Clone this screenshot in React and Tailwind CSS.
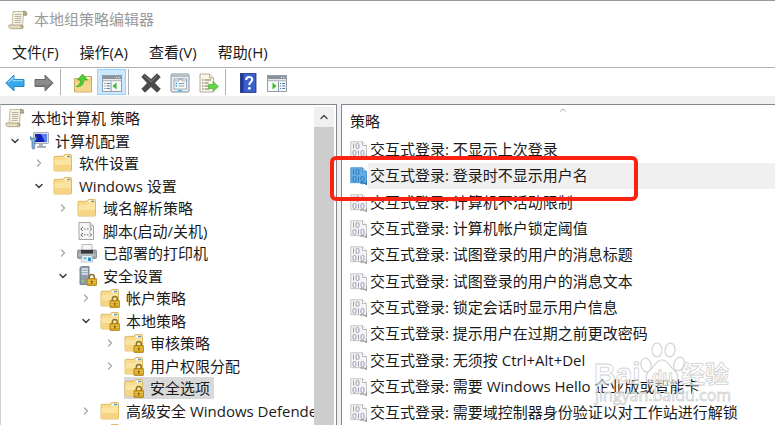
import { useState } from 'react'
import { ChevronDown, ChevronRight, ChevronUp } from 'lucide-react'
import clsx from 'clsx'

const ScrollIcon = ({ className }) => (
  <svg viewBox="0 0 20 20" className={className} aria-hidden="true">
    <path d="M5 1.500h11.500c1 0 1.500 1 1.300 2l-.4 1.200h-2L14.500 17H4z" fill="#f6f0dc" stroke="#b5ad92" strokeWidth=".8" />
    <path d="M15.500 1.200c2.500-.3 3.500 1 3.200 4h-3z" fill="#b9ae8c" stroke="#8d8468" strokeWidth=".7" />
    <path d="M7 4.500h6.500M6.900 6.500h6.500M6.800 8.500h6.500M6.700 10.500h6.500M6.600 12.500h6" stroke="#b0aca4" strokeWidth=".9" />
    <path d="M1 15h12c-.6 1.500-.2 3 1 3.700H2.800C1.200 18.500 .6 17 1 15z" fill="#e5dcbd" stroke="#a39b80" strokeWidth=".8" />
    <path d="M13 15c2.200 0 2.700 2.800 1 3.700" fill="#c9bd97" stroke="#8d8468" />
  </svg>
)

const ComputerIcon = ({ className }) => (
  <svg viewBox="0 0 20 20" className={className} aria-hidden="true">
    <rect x="4.500" y="1.500" width="15" height="11" rx=".8" fill="#d9dde2" stroke="#8a9099" strokeWidth=".7" />
    <path d="M6 3h12v8H6z" fill="#1420b8" />
    <path d="M12 3h6v8h-2z" fill="#5a7ff0" />
    <path d="M10 12.500h4v2.500h3v2H8v-2h2z" fill="#aab0b8" />
    <path d="M1.500 5.500v3.200l1.500 1V17c0 1.300 2.700 1.300 2.700 0V9.700l1.500-1V5.500L5.700 7.200H3z" fill="#7fb4e0" stroke="#456f95" strokeWidth=".7" />
  </svg>
)

const FolderShape = () => (
  <>
    <path d="M1 4.500c0-.8.3-1.200 1-1.200h8l1.500-1.800h6c.7 0 1 .3 1 1V17c0 .7-.3 1-1 1H2c-.7 0-1-.3-1-1z" fill="#f8dc8c" stroke="#d9ac4a" strokeWidth=".8" />
    <path d="M1.500 7h9l1.500-1.500h6V17.400H1.500z" fill="#fbe3a0" />
    <path d="M1.500 12h16.500v5.400H1.500z" fill="#f5d583" />
    <path d="M12 3.500h5" stroke="#fff" strokeWidth="1.800" />
    <path d="M14 3.500h3" stroke="#4a9be0" strokeWidth="1.400" />
  </>
)

const LockShape = () => (
  <>
    <path d="M12.300 13v-1.800c0-3.600 5-3.600 5 0V13" fill="none" stroke="#8a7430" strokeWidth="1.500" />
    <rect x="10" y="12.500" width="9.500" height="7" rx=".6" fill="#d9a520" stroke="#9c7410" strokeWidth=".7" />
    <path d="M10.600 14.500h8.400M10.600 16.500h8.400" stroke="#f0ca58" strokeWidth=".8" />
    <path d="M14.800 14.500v3" stroke="#6a4c08" strokeWidth="1.200" />
  </>
)

const FolderIcon = ({ className }) => (
  <svg viewBox="0 0 20 20" className={className} aria-hidden="true">
    <FolderShape />
  </svg>
)

const LockedFolderIcon = ({ className }) => (
  <svg viewBox="0 0 20 20" className={className} aria-hidden="true">
    <FolderShape />
    <LockShape />
  </svg>
)

const ScriptIcon = ({ className }) => (
  <svg viewBox="0 0 20 20" className={className} aria-hidden="true">
    <path d="M2 1.500h11l3.500 3.500v13.500H2z" fill="#f7f7f7" stroke="#999" strokeWidth=".9" />
    <path d="M13 1.500V5h3.500" fill="#ddd" stroke="#999" strokeWidth=".8" />
    <path d="M6 6 3.800 8 6 10M12.500 6l2.200 2-2.200 2M7 8h1.500M10 8h1.500M6 12l-2.200 1.800L6 15.600M12.500 12l2.200 1.800-2.200 1.800M7 13.800h1.500M10 13.800h1.500" fill="none" stroke="#666" />
  </svg>
)

const PrinterIcon = ({ className }) => (
  <svg viewBox="0 0 20 20" className={className} aria-hidden="true">
    <path d="M5 1.500h10V8H5z" fill="#f4f6f8" stroke="#a5a9ad" strokeWidth=".8" />
    <rect x=".5" y="7" width="19" height="8.500" rx="1" fill="#a1a5a9" stroke="#73777b" strokeWidth=".7" />
    <path d="M4 7h12v3.500H4z" fill="#35383b" />
    <path d="M1.500 12h17" stroke="#d3d5d7" />
    <path d="M5 12.500h10l.8 6.500H4.200z" fill="#e8f5fc" stroke="#9ab" strokeWidth=".6" />
    <path d="M6.500 14h3v2.500h-3z" fill="#6fc3e8" />
    <path d="M11 14.500h3v3.500h-3z" fill="#2b8ec4" />
  </svg>
)

const ServerLockIcon = ({ className }) => (
  <svg viewBox="0 0 20 20" className={className} aria-hidden="true">
    <path d="M3 1.500 5 .5h7v18H3z" fill="#8f9eac" stroke="#5f6e7c" strokeWidth=".8" />
    <path d="M4.500 3h6.500M4.500 5.500h6.500M4.500 8h6.500" stroke="#dde7ee" strokeWidth="1.300" />
    <path d="M4.500 15h3" stroke="#7de05a" strokeWidth="1.300" />
    <LockShape />
  </svg>
)

const PolicyIcon = ({ selected }) => (
  <svg viewBox="0 0 18 18" className="size-[18px] shrink-0" aria-hidden="true">
    <path
      d="M.8.800h11.700l4 3.700v13l-2.500-1.200-2 .7-2-1.300H.8z"
      fill={selected ? '#64aee4' : '#f5f5f5'}
      stroke={selected ? '#4593cf' : '#bdbdbd'}
      strokeWidth=".9"
    />
    <path d="M12.500.8v3.700h4" fill={selected ? '#a4d3f4' : '#fff'} stroke={selected ? '#3d8aca' : '#a8a8a8'} strokeWidth=".8" />
    <path d="m10 15.700 3.500.1 3 1.500v-3.500" fill="none" stroke={selected ? '#2b6fa8' : '#9a9a9a'} strokeWidth="1.100" />
    <g fill="none" stroke={selected ? '#2e72b4' : '#9590ad'} strokeWidth=".9">
      <path d="M3.500 2.500v5M8.500 9.500v5" />
      <rect x="6" y="2.500" width="3" height="5" rx="1.300" />
      <rect x="3" y="9.500" width="3" height="5" rx="1.300" />
      <rect x="11" y="9.500" width="3" height="5" rx="1.300" />
    </g>
  </svg>
)

const ArrowIcon = ({ forward }) => (
  <svg viewBox="0 0 20 20" className={clsx('size-5', forward && 'rotate-180')} aria-hidden="true">
    <path
      d="M.8 10 9 2v4.500h10v7H9V18z"
      fill={forward ? '#8b8b8b' : '#36a8ea'}
      stroke={forward ? '#6a6a6a' : '#2b86c8'}
      strokeLinejoin="round"
    />
    <path d="M3 9.500 8 4.700v3h9.800" fill="none" stroke={forward ? '#777' : '#8bd5fa'} strokeWidth="1.200" />
  </svg>
)

const UpFolderIcon = () => (
  <svg viewBox="0 0 20 20" className="size-5" aria-hidden="true">
    <path d="M1.500 5.500h7l1.500-2h8.500v15.500h-17z" fill="#f0cf80" stroke="#c19b46" strokeWidth=".8" />
    <path d="M2 9h16v9.500H2z" fill="#f4d78e" />
    <path d="M13 5h4" stroke="#fff" strokeWidth="1.200" />
    <path d="M3 13.500c3.500-1 4.500-3.500 4.300-6.500H4.500L9.500 1l5 6h-3.700C11 11 8 14.500 3 13.500z" fill="#4fcf37" stroke="#3aa52c" strokeWidth=".7" />
  </svg>
)

// Console window with a side panel, the arrow shows which side folds away
const PaneIcon = ({ side }) => (
  <svg viewBox="0 0 20 20" className="size-5" aria-hidden="true">
    <rect x=".5" y="2.500" width="19" height="16" fill="#f7f8f9" stroke="#8c949f" strokeWidth=".9" />
    <path d="M1 3h18v3H1z" fill="#8a929e" />
    <path d="M14 4.500h1M16.500 4.500h1" stroke="#fff" />
    <path d="M1 7.500h18" stroke="#b6bdc5" strokeWidth="1.500" />
    {side === 'left' ? (
      <>
        <path d="M9 8.500v10" stroke="#8c949f" />
        <path d="M2.500 10.500h1M2.500 13h1M2.500 15.500h1M4.700 10.500h3M4.700 13h3M4.700 15.500h3" stroke="#4c7fb5" strokeWidth="1.200" />
        <path d="M14.500 9.500v7L10.500 13z" fill="#3dbb2c" />
      </>
    ) : (
      <>
        <path d="M11.500 8.500v10" stroke="#8c949f" />
        <path d="M13 10.500h1M13 13h1M13 15.500h1M15.200 10.500h3M15.200 13h3M15.200 15.500h3" stroke="#4c7fb5" strokeWidth="1.200" />
        <path d="M5.500 9.500v7l4-3.500z" fill="#3dbb2c" />
      </>
    )}
  </svg>
)

const DeleteIcon = () => (
  <svg viewBox="0 0 20 20" className="size-5" aria-hidden="true">
    <path d="M3.500 1 10 6.500 16 .8 19.300 4 13.500 10 19.300 16 16 19.200 10 13.500 4 19.200.8 16 6.500 10 .8 4z" fill="#4a4a4a" stroke="#3a3a3a" strokeWidth=".8" strokeLinejoin="round" />
    <path d="m3.500 3 6.500 5.700L16 3" fill="none" stroke="#858585" />
  </svg>
)

const PropertiesIcon = () => (
  <svg viewBox="0 0 20 20" className="size-5" aria-hidden="true">
    <rect x="1" y="1" width="18" height="18" rx="1" fill="#e7eaee" stroke="#87919c" />
    <path d="M1.500 3h17" stroke="#a7b0ba" strokeWidth="1.500" />
    <path d="M4 6h12.500v10H4z" fill="#fff" stroke="#8b97a6" strokeWidth=".8" />
    <path d="M4 8h5V6h3v2h4.500" fill="none" stroke="#8b97a6" strokeWidth=".8" />
    <path d="M5.500 10.500h1.500M5.500 13h1.500" stroke="#2d9bdc" strokeWidth="1.300" />
    <path d="M8.500 10.500h6M8.500 13h6" stroke="#8893a0" />
    <path d="M8 17.800h4" stroke="#38b2e5" strokeWidth="1.500" />
  </svg>
)

const ExportIcon = () => (
  <svg viewBox="0 0 20 20" className="size-5" aria-hidden="true">
    <path d="M1 1h9.500L14.500 5v14H1z" fill="#fbf7e4" stroke="#a8a48e" strokeWidth=".9" />
    <path d="M10.500 1v4h4" fill="#e9e3c5" stroke="#a8a48e" strokeWidth=".8" />
    <path d="M3 7h1.500M3 10h1.500M3 13h1.500M3 16h1.500M5.500 7h6.500M5.500 10h4M5.500 13h4M5.500 16h5" stroke="#77736a" />
    <path d="M9.500 11.500H14V8.500l5.500 5-5.500 5v-3H9.500z" fill="#62d348" stroke="#4bb038" strokeWidth=".7" />
  </svg>
)

const HelpIcon = () => (
  <svg viewBox="0 0 20 20" className="size-5" aria-hidden="true">
    <rect x="2.500" y=".5" width="15.500" height="19" fill="#3860cf" stroke="#20327c" strokeWidth=".8" />
    <path d="M2.500.5h3v19h-3z" fill="#22388e" />
    <path d="M8.200 7c0-4 6-4 6-.5 0 2.700-2.900 2.500-2.900 5.500" fill="none" stroke="#fff" strokeWidth="2.100" />
    <circle cx="11.300" cy="15.300" r="1.400" fill="#fff" />
  </svg>
)

const menus = ['文件(F)', '操作(A)', '查看(V)', '帮助(H)']

const toolGroups = [
  [
    { label: '后退', icon: <ArrowIcon /> },
    { label: '前进', icon: <ArrowIcon forward /> },
  ],
  [
    { label: '向上一级', icon: <UpFolderIcon /> },
    { label: '显示/隐藏控制台树', icon: <PaneIcon side="left" />, active: true },
  ],
  [
    { label: '删除', icon: <DeleteIcon /> },
    { label: '属性', icon: <PropertiesIcon /> },
    { label: '导出列表', icon: <ExportIcon /> },
  ],
  [
    { label: '帮助', icon: <HelpIcon /> },
    { label: '显示/隐藏操作窗格', icon: <PaneIcon side="right" /> },
  ],
]

const tree = [
  { label: '本地计算机 策略', level: 0, icon: ScrollIcon },
  { label: '计算机配置', level: 1, icon: ComputerIcon, state: 'open' },
  { label: '软件设置', level: 2, icon: FolderIcon, state: 'closed' },
  { label: 'Windows 设置', level: 2, icon: FolderIcon, state: 'open' },
  { label: '域名解析策略', level: 3, icon: FolderIcon, state: 'closed' },
  { label: '脚本(启动/关机)', level: 3, icon: ScriptIcon },
  { label: '已部署的打印机', level: 3, icon: PrinterIcon, state: 'closed' },
  { label: '安全设置', level: 3, icon: ServerLockIcon, state: 'open' },
  { label: '帐户策略', level: 4, icon: LockedFolderIcon, state: 'closed' },
  { label: '本地策略', level: 4, icon: LockedFolderIcon, state: 'open' },
  { label: '审核策略', level: 5, icon: LockedFolderIcon, state: 'closed' },
  { label: '用户权限分配', level: 5, icon: LockedFolderIcon, state: 'closed' },
  { label: '安全选项', level: 5, icon: LockedFolderIcon, selected: true },
  { label: '高级安全 Windows Defender', level: 4, icon: FolderIcon, state: 'closed' },
  { label: '', level: 4, icon: FolderIcon },
]

const indents = ['pl-1', 'pl-1', 'pl-7', 'pl-[52px]', 'pl-[75px]', 'pl-[99px]']

const policies = [
  '交互式登录: 不显示上次登录',
  '交互式登录: 登录时不显示用户名',
  '交互式登录: 计算机不活动限制',
  '交互式登录: 计算机帐户锁定阈值',
  '交互式登录: 试图登录的用户的消息标题',
  '交互式登录: 试图登录的用户的消息文本',
  '交互式登录: 锁定会话时显示用户信息',
  '交互式登录: 提示用户在过期之前更改密码',
  '交互式登录: 无须按 Ctrl+Alt+Del',
  '交互式登录: 需要 Windows Hello 企业版或智能卡',
  '交互式登录: 需要域控制器身份验证以对工作站进行解锁',
]

const TreeRow = ({ item }) => {
  const Icon = item.icon
  return (
    <li className={clsx('flex shrink-0 items-center odd:h-[22px] even:h-[23px]', indents[item.level])}>
      {item.level > 0 && (
        <span className="mr-1 flex w-5 shrink-0 justify-center">
          {item.state === 'open' && <ChevronDown className="size-3 text-[#404040]" strokeWidth={3} />}
          {item.state === 'closed' && <ChevronRight className="size-3 text-[#a6a6a6]" strokeWidth={2.5} />}
        </span>
      )}
      <button
        type="button"
        className={clsx('flex h-full items-center gap-1.5 whitespace-nowrap pr-1', item.selected && 'bg-[#d9d9d9]')}
      >
        <Icon className="size-5 shrink-0" />
        {item.label}
      </button>
    </li>
  )
}

const Watermark = () => (
  <svg viewBox="0 0 142 70" className="pointer-events-none absolute right-10 bottom-[15px] w-[142px]" aria-hidden="true">
    <g fill="#ffffff" fillOpacity=".5" stroke="#d2d2d2" strokeWidth="1.200">
      <ellipse cx="53" cy="25" rx="5" ry="7" transform="rotate(-15 53 25)" />
      <ellipse cx="64" cy="10" rx="5" ry="7" />
      <ellipse cx="77" cy="10" rx="5" ry="7" transform="rotate(8 77 10)" />
      <ellipse cx="86" cy="24" rx="5" ry="7" transform="rotate(20 86 24)" />
      <path d="M69 20c6 0 7 6 12 10 5 5 6 14-3 15-5 .5-13 .5-18 0-9-1-8-11-3-15 5-4 6-10 12-10z" />
      <g strokeWidth=".8">
        <text x="1" y="44" fontSize="30" fontWeight="700" fontFamily="Liberation Sans, sans-serif">Bai</text>
        <text x="59" y="42" fontSize="17" fontWeight="700" fontFamily="Liberation Sans, sans-serif">du</text>
        <text x="88" y="43" fontSize="24" fontWeight="700" fontFamily="Noto Sans CJK SC, sans-serif">经验</text>
      </g>
      <text x="2" y="61" fontSize="16" strokeWidth=".8" fontFamily="Open Sans, sans-serif">jingyan.baidu.com</text>
    </g>
  </svg>
)

const App = () => {
  const [current, setCurrent] = useState(1)

  return (
    <div className="relative flex h-screen flex-col overflow-hidden border-t border-[#9a9a9a] bg-[#f0f0f0] font-['Open_Sans','Noto_Sans_CJK_SC',sans-serif] text-[15px] leading-5 text-[#1a1a1a]">
      <header className="flex h-[38px] shrink-0 items-center gap-1.5 bg-white pl-2">
        <ScrollIcon className="size-5" />
        <h1 className="pb-0.5 text-[#999999]">本地组策略编辑器</h1>
      </header>

      <nav className="flex h-7 shrink-0 items-center gap-[21px] bg-white pb-0.5 pl-3">
        {menus.map((menu) => (
          <button key={menu} type="button">{menu}</button>
        ))}
      </nav>

      <div className="flex h-[29px] shrink-0 items-center border-t border-[#a9b3bd] bg-white">
        {toolGroups.map((group, i) => (
          <div key={i} className={clsx('flex items-center', i > 0 && 'ml-0.5 border-l border-[#b0b0b0] pl-[7px]')}>
            {group.map((tool) => (
              <button
                key={tool.label}
                type="button"
                aria-label={tool.label}
                className={clsx(
                  'flex h-[26px] w-[29px] items-center justify-center border pt-0.5',
                  tool.active ? 'border-[#99d1ff] bg-[#cce8ff]' : 'border-transparent'
                )}
              >
                {tool.icon}
              </button>
            ))}
          </div>
        ))}
      </div>

      <main className="mt-2 flex min-h-0 flex-1 gap-1">
        <section className="flex w-[337px] shrink-0 border-x border-t border-[#828790] border-l-[#d0d0d0] bg-white pr-0.5">
          <ul className="flex min-w-0 flex-1 flex-col overflow-hidden pt-0.5">
            {tree.map((item, i) => (
              <TreeRow key={i} item={item} />
            ))}
          </ul>
          <div className="flex w-5 shrink-0 flex-col pt-0.5">
            <button type="button" aria-label="向上滚动" className="flex h-5 items-center justify-center bg-[#f0f0f0]">
              <ChevronUp className="size-3 text-[#505050]" strokeWidth={3} />
            </button>
            <div className="flex-1 bg-[#cdcdcd]" />
          </div>
        </section>

        <section className="min-w-0 flex-1 overflow-hidden border-t border-l border-[#828790] bg-white">
          <div className="grid h-8 grid-cols-[1fr_auto_1fr] pl-2">
            <h2 className="self-center">策略</h2>
            <ChevronUp className="size-2.5 text-[#909090]" />
          </div>
          <ul>
            {policies.map((policy, i) => (
              <li key={policy} className="h-[26px] nth-[3n]:h-[27px]">
                <button type="button" onClick={() => setCurrent(i)} className="flex size-full items-center pl-2 text-left whitespace-nowrap">
                  <PolicyIcon selected={i === current} />
                  <span className={clsx('flex h-full flex-1 items-center pb-0.5 pl-0.5', i === current && 'bg-[#f0f0f0]')}>{policy}</span>
                </button>
              </li>
            ))}
          </ul>
        </section>
      </main>

      <div className="pointer-events-none absolute top-[155px] left-[330px] h-[45px] w-[308px] rounded-md border-4 border-[#fb2214]" />
      <Watermark />
    </div>
  )
}

export default App
